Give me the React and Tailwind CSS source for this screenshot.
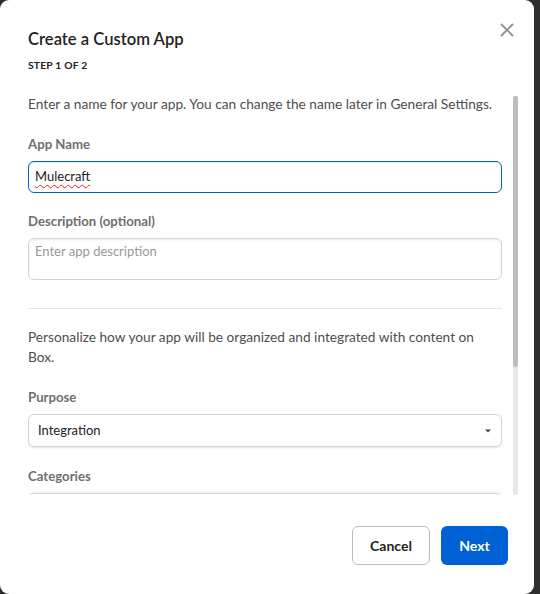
export default function App() {
  const label = "text-[13.2px] leading-[20px] font-bold text-[#6f6f6f]";
  return (
    <div className="w-[540px] h-[594px] bg-[#2e2e2e] overflow-hidden font-[Lato,'Noto_Sans',sans-serif]">
      <div className="w-[534px] h-[594px] bg-white rounded-[9px] flex flex-col">
        <div className="relative px-[28px] pt-[27px]">
          <h1 className="text-[16.6px] leading-[24px] font-semibold text-[#222222]">Create a Custom App</h1>
          <div className="mt-[8px] text-[10.3px] leading-[12px] font-bold text-[#222222] tracking-[0.2px]">STEP 1 OF 2</div>
          <button className="absolute right-[20px] top-[23px] w-[14px] h-[14px] flex items-center justify-center">
            <svg width="14" height="14" viewBox="0 0 14 14" fill="none">
              <path d="M1.5 1.5 L12.5 12.5 M12.5 1.5 L1.5 12.5" stroke="#909090" strokeWidth="1.8" strokeLinecap="round" />
            </svg>
          </button>
        </div>

        <div className="flex h-[407px] mt-[17px]">
          <div className="w-[474px] ml-[28px] overflow-hidden pt-[6px]">
            <p className="text-[13.7px] leading-[20px] text-[#4e4e4e]">
              Enter a name for your app. You can change the name later in General Settings.
            </p>
            <div className={`mt-[20px] ${label}`}>App Name</div>
            <div className="mt-[7px] h-[32px] border border-[#0061d5] rounded-[6px] pl-[6px] flex items-center text-[13px] text-[#222222] shadow-[inset_0_1px_1px_rgba(0,0,0,0.08)]">
              <span className="underline decoration-wavy decoration-[#e02020] decoration-1 underline-offset-[3px]">Mulecraft</span>
            </div>
            <div className={`mt-[18px] ${label}`}>Description (optional)</div>
            <div className="mt-[7px] h-[42px] border border-[#d3d3d3] rounded-[6px] pl-[6px] pt-[2px] text-[13px] leading-[20px] text-[#9a9a9a] shadow-[inset_0_1px_2px_rgba(0,0,0,0.08)]">
              Enter app description
            </div>
            <div className="mt-[28px] h-px bg-[#e8e8e8]" />
            <p className="mt-[18px] pr-[12px] text-[13.7px] leading-[20px] text-[#4e4e4e]">
              Personalize how your app will be organized and integrated with content on Box.
            </p>
            <div className={`mt-[20px] ${label}`}>Purpose</div>
            <div className="mt-[7px] h-[33px] border border-[#d3d3d3] rounded-[6px] pl-[9px] pr-[10px] flex items-center justify-between text-[13px] text-[#222222] shadow-[0_1px_2px_rgba(0,0,0,0.1)]">
              <span>Integration</span>
              <svg width="6" height="4" viewBox="0 0 6 4">
                <path d="M0 0.5 L6 0.5 L3 3.5 Z" fill="#444" />
              </svg>
            </div>
            <div className={`mt-[19px] ${label}`}>Categories</div>
            <div className="mt-[7px] h-[32px] border border-[#d3d3d3] rounded-[6px] shadow-[0_-1px_4px_rgba(0,0,0,0.06)]" />
          </div>
          <div className="ml-[11px] mt-[8px] w-[5px] h-[399px] bg-[#e8e8e8] rounded-[2px]">
            <div className="h-[271px] bg-[#bdbdbd] rounded-[2px]" />
          </div>
        </div>

        <div className="flex justify-end gap-[11px] pr-[26px] pt-[31px]">
          <button className="w-[78px] h-[39px] border border-[#bcbcbc] rounded-[6px] text-[14px] font-bold text-[#222222] bg-white">
            Cancel
          </button>
          <button className="w-[67px] h-[39px] rounded-[6px] text-[14px] font-bold text-white bg-[#0061d5]">
            Next
          </button>
        </div>
      </div>
    </div>
  );
}
